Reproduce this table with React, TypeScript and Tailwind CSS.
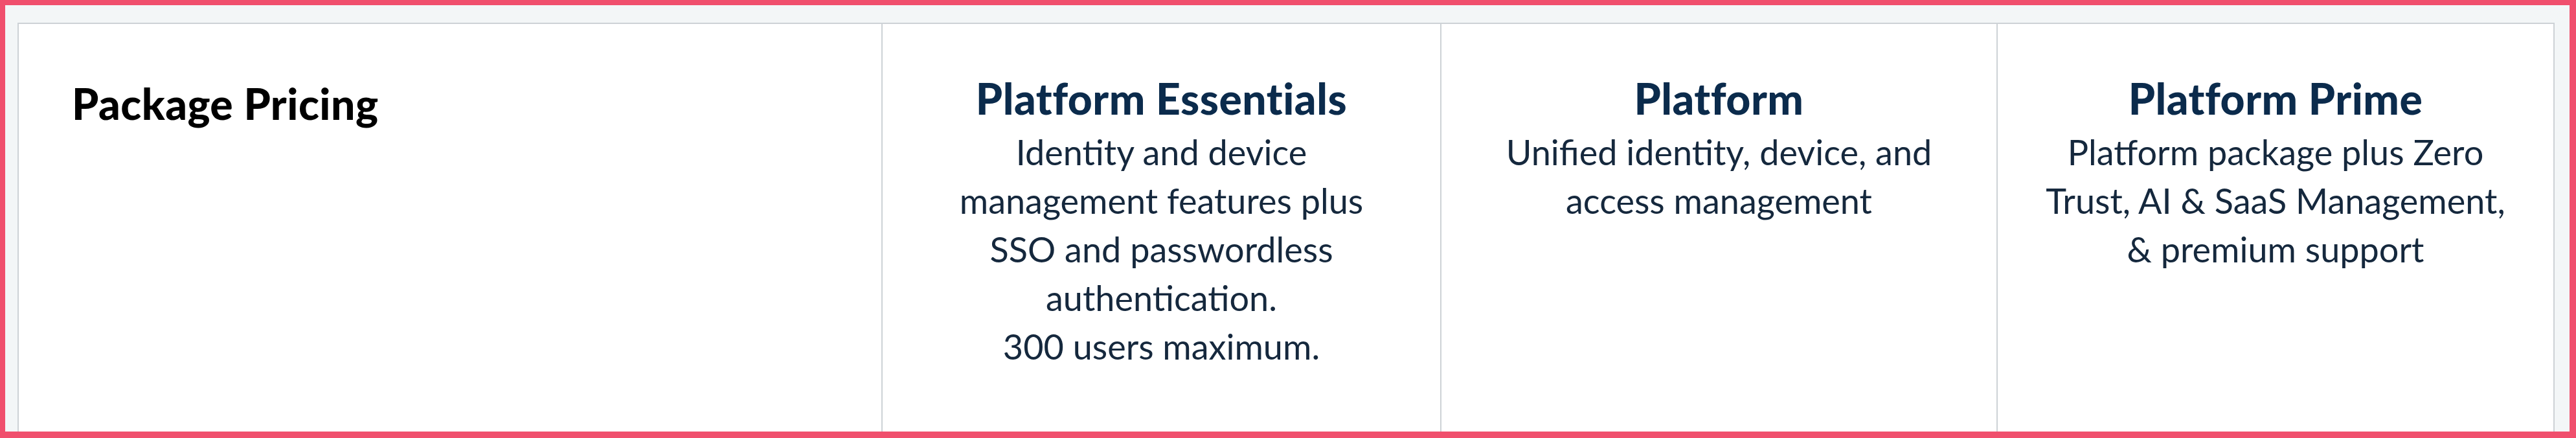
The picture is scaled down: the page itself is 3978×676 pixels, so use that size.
import React from "react";

type Plan = {
  name: string;
  description: React.ReactNode;
};

const plans: Plan[] = [
  {
    name: "Platform Essentials",
    description: (
      <>
        Identity and device management features plus SSO and passwordless
        authentication.
        <br />
        300 users maximum.
      </>
    ),
  },
  {
    name: "Platform",
    description: "Unified identity, device, and access management",
  },
  {
    name: "Platform Prime",
    description:
      "Platform package plus Zero Trust, AI & SaaS Management, & premium support",
  },
];

export default function App() {
  return (
    <div className="h-[676px] overflow-hidden border-t-8 border-l-8 border-r-[10px] border-b-[10px] border-[#f04f6d] bg-[#f3f6f7] pt-[27px] pl-[19px] pr-[23px] font-['Lato','Liberation_Sans',sans-serif]">
      {/* pricing table header row */}
      <div className="grid h-full grid-cols-[1332px_863px_859px_1fr] border-t-2 border-l-2 border-r-2 border-[#cdd2d6] bg-white">
        <div className="pl-[82px] pt-[83px]">
          <h2 className="text-[66px] font-black leading-[1.2] tracking-[0.5px] text-black">
            Package Pricing
          </h2>
        </div>
        {plans.map((plan) => (
          <div
            key={plan.name}
            className="border-l-2 border-[#cdd2d6] pt-[75px] text-center"
          >
            <h3 className="text-[66px] font-black leading-[1.2] tracking-[0.5px] text-[#0b2b4c]">
              {plan.name}
            </h3>
            <p className="mx-auto mt-[6px] max-w-[712px] text-[54px] leading-[75px] text-[#15283d]">
              {plan.description}
            </p>
          </div>
        ))}
      </div>
    </div>
  );
}
